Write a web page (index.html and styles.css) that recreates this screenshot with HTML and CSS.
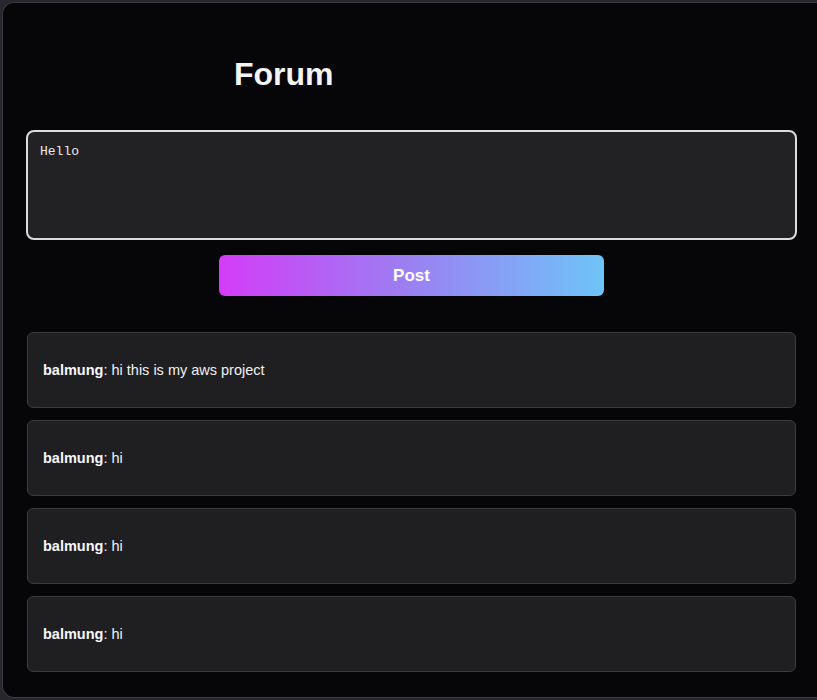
FILE: index.html
```html
<!DOCTYPE html>
<html lang="en">
<head>
<meta charset="utf-8">
<title>Forum</title>
<link rel="stylesheet" href="styles.css">
</head>
<body>
<main class="panel">
  <h1 class="title">Forum</h1>
  <form class="composer">
    <textarea class="input">Hello</textarea>
    <button type="button" class="post-btn">Post</button>
  </form>
  <section class="posts">
    <div class="post"><span class="user">balmung</span>: hi this is my aws project</div>
    <div class="post"><span class="user">balmung</span>: hi</div>
    <div class="post"><span class="user">balmung</span>: hi</div>
    <div class="post"><span class="user">balmung</span>: hi</div>
  </section>
</main>
</body>
</html>
```

FILE: styles.css
```css
html, body {
  margin: 0;
  height: 100%;
  overflow: hidden;
}
body {
  background: #26262c;
  font-family: "Liberation Sans", Arial, sans-serif;
  padding: 2px 0 0 2px;
  box-sizing: border-box;
}
.panel {
  box-sizing: border-box;
  height: 696px;
  background: #060609;
  border: 1px solid #3a3a42;
  border-right: none;
  border-radius: 12px 0 0 12px;
  padding: 51px 0 0 23px;
}
.title {
  margin: 0 0 36px 208px;
  font-size: 32px;
  line-height: 40px;
  font-weight: bold;
  color: #f4f4f4;
}
.composer {
  width: 771px;
  display: flex;
  flex-direction: column;
  align-items: center;
  gap: 15px;
  margin: 0;
}
.input {
  box-sizing: border-box;
  width: 771px;
  height: 110px;
  margin: 0;
  padding: 12px;
  background: #222225;
  border: 2px solid #dcdcdc;
  border-radius: 8px;
  color: #ececec;
  font-family: "Liberation Mono", "Courier New", monospace;
  font-size: 13px;
  line-height: 15px;
  resize: none;
  outline: none;
}
.post-btn {
  width: 385px;
  height: 41px;
  border: none;
  border-radius: 6px;
  background: linear-gradient(90deg, #d43cf8 0%, #9f7af2 45%, #6ec4f8 100%);
  color: #ffffff;
  font-family: "Liberation Sans", Arial, sans-serif;
  font-size: 17px;
  font-weight: bold;
  cursor: pointer;
}
.posts {
  width: 771px;
  margin-top: 36px;
  display: flex;
  flex-direction: column;
  gap: 12px;
  padding-left: 1px;
  box-sizing: border-box;
}
.post {
  box-sizing: border-box;
  width: 769px;
  height: 76px;
  display: flex;
  align-items: center;
  padding-left: 15px;
  background: #1f1f22;
  border: 1px solid #3a3a3f;
  border-radius: 6px;
  color: #f0f0f0;
  font-size: 14.5px;
  white-space: pre;
}
.user {
  font-weight: bold;
  color: #f6f6f6;
}
```
